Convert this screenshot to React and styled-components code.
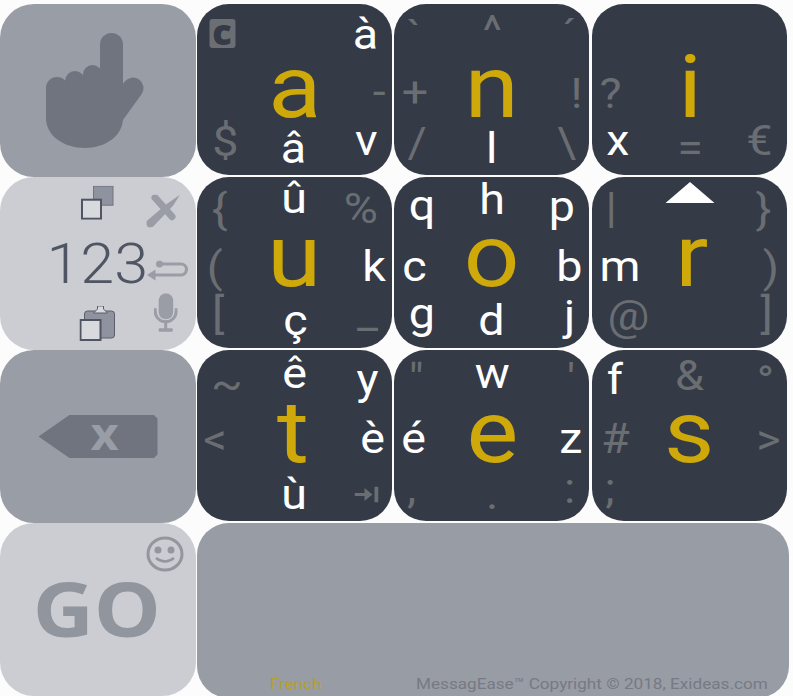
import React from "react";
import styled, { createGlobalStyle } from "styled-components";

const Global = createGlobalStyle`
    html, body {
        margin: 0;
        height: 696px;
        overflow: hidden;
        background-color: #FCFCFC;
        font-family: Roboto, "Liberation Sans", sans-serif;
    }
`;

const Board = styled.div`
    display: grid;
    grid-template-columns: 197px 197px 198px 198px;
    grid-template-rows: 173px 173px 173px 173px;
    padding-top: 4px;
    width: 793px;
    height: 692px;
    overflow: hidden;
`;

const SideKey = styled.div`
    position: relative;
    display: grid;
    grid-template-columns: repeat(3, minmax(0, 1fr));
    grid-template-rows: repeat(3, minmax(0, 1fr));
    width: 196px;
    height: 173px;
    border-radius: 34px;
    background-color: ${props => props.$light ? "#CBCDD3" : "#999DA5"};
`;

const CenterKey = styled(SideKey)`
    display: flex;
    align-items: center;
    justify-content: center;
`;

const Key = styled.div`
    display: grid;
    grid-template-columns: repeat(3, 65px);
    grid-template-rows: repeat(3, 57px);
    width: 195px;
    height: 171px;
    border-radius: 32px;
    background-color: #343A46;
`;

const WideKey = styled.div`
    grid-column: 2 / span 3;
    display: flex;
    align-items: flex-end;
    width: 592px;
    height: 175px;
    padding: 0 0 5px 73px;
    box-sizing: border-box;
    border-radius: 32px;
    background-color: #989CA4;
`;

const Slot = styled.div`
    grid-column: ${props => props.$col + 1};
    grid-row: ${props => props.$row + 1};
    justify-self: center;
    align-self: center;
    line-height: ${props => props.$size > 80 ? 0.6 : 1};
    font-size: ${props => props.$size || 42}px;
    font-weight: ${props => props.$weight || 400};
    color: ${props => props.$color || "#FFFFFF"};
    white-space: nowrap;
    transform: translate(${props => props.$dx || 0}px, ${props => props.$dy || 0}px) scaleX(${props => props.$text ? 1.11 : 1});
    svg { display: block; }
`;

const CBadge = styled.div`
    width: 26px;
    height: 29px;
    border-radius: 3px;
    background-color: #6B6E73;
    color: #343A46;
    font-family: "Open Sans", sans-serif;
    font-weight: 800;
    font-size: 36px;
    line-height: 25px;
    text-align: center;
`;

const HandWrap = styled.div`
    margin-right: 6px;
    svg { display: block; }
`;

const Backspace = styled.div`
    display: flex;
    align-items: center;
    justify-content: center;
    width: 119px;
    height: 43px;
    padding-left: 14px;
    box-sizing: border-box;
    background-color: #6F747F;
    clip-path: polygon(26% 0, 97% 0, 100% 8%, 100% 92%, 97% 100%, 26% 100%, 0 50%);
`;

const BackspaceX = styled.span`
    display: block;
    color: #999DA5;
    font-family: "Open Sans", sans-serif;
    font-weight: 700;
    font-size: 44px;
    line-height: 43px;
    transform: translateY(-3px) scaleX(1.11);
`;

const Go = styled.div`
    font-family: "Open Sans", sans-serif;
    font-weight: 700;
    font-size: 76px;
    line-height: 1;
    color: #91959E;
    margin: -3px 3px 0 0;
    transform: scaleX(1.11);
`;

const SmileBadge = styled.div`
    position: absolute;
    top: 13px;
    right: 12px;
    svg { display: block; }
`;

const French = styled.span`
    display: block;
    width: 146px;
    font-size: 15.5px;
    line-height: 18px;
    color: #B3A02E;
    transform: scaleX(1.1);
    transform-origin: left center;
`;

const Copyright = styled.span`
    display: block;
    font-size: 15.5px;
    line-height: 18px;
    color: #767A84;
    white-space: nowrap;
    transform: scaleX(1.106);
    transform-origin: left center;
`;

const GOLD = "#CFA90A";
const GREY = "#6A6D72";

const gold = (t, col, row, dx, dy) => ({ t, col, row, dx, dy, size: 88, color: GOLD, text: true });
const white = (t, col, row, dx, dy) => ({ t, col, row, dx, dy, text: true });
const grey = (t, col, row, dx, dy) => ({ t, col, row, dx, dy, color: GREY, text: true });

function Triangle() {
    return (
        <svg width="49" height="21" viewBox="0 0 49 21">
            <polygon points="24.5,0 49,21 0,21" fill="#FFFFFF" />
        </svg>
    );
}

function TabIcon() {
    return (
        <svg width="24" height="16" viewBox="0 0 24 16" fill={GREY}>
            <rect x="20" y="0" width="4" height="16" />
            <rect x="0" y="6.5" width="12" height="3" />
            <polygon points="10,1.5 18,8 10,14.5" />
        </svg>
    );
}

const keys = [
    [
        { t: <CBadge>c</CBadge>, col: 0, row: 0, dx: -7.5, dy: 1 },
        white("à", 2, 0, 6, 2),
        gold("a", 1, 1, 0, -2.5),
        grey("-", 2, 1, 19.5, 2),
        grey("$", 0, 2, -4.5, -5),
        white("â", 1, 2, -1, 1.5),
        white("v", 2, 2, 7, -6),
    ],
    [
        grey("`", 0, 0, -12.5, 4),
        grey("^", 1, 0, 0.5, -2),
        grey("´", 2, 0, 12.5, 3),
        grey("+", 0, 1, -12, 3),
        gold("n", 1, 1, 0.5, -2.5),
        grey("!", 2, 1, 20, 4),
        grey("/", 0, 2, -9.5, -4),
        white("l", 1, 2, 0.5, 2),
        grey("\\", 2, 2, 10, -4),
    ],
    [
        gold("i", 1, 1, 0.5, -2.5),
        grey("?", 0, 1, -14.5, 4),
        white("x", 0, 2, -6.5, -6),
        grey("=", 1, 2, 0.5, 1),
        grey("€", 2, 2, 4.5, -6),
    ],
    [
        grey("{", 0, 0, -9.5, 4),
        white("û", 1, 0, -0.5, -7),
        grey("%", 2, 0, 1.5, 3),
        grey("(", 0, 1, -14.5, 5),
        gold("u", 1, 1, 0, -6),
        white("k", 2, 1, 14.5, 4),
        grey("[", 0, 2, -11.5, -6),
        white("ç", 1, 2, 0.5, 1),
        grey("_", 2, 2, 8, -6),
    ],
    [
        white("q", 0, 0, -5, 0),
        white("h", 1, 0, 0.5, -6),
        white("p", 2, 0, 5, 1),
        white("c", 0, 1, -12.5, 4),
        gold("o", 1, 1, 0.5, -6),
        white("b", 2, 1, 12.5, 4),
        white("g", 0, 2, -5, -6),
        white("d", 1, 2, -0.5, 1),
        white("j", 2, 2, 13.5, -4),
    ],
    [
        grey("|", 0, 0, -13, 2),
        { t: <Triangle />, col: 1, row: 0, dx: 0.5, dy: -13 },
        grey("}", 2, 0, 9.5, 4),
        white("m", 0, 1, -4.5, 4),
        gold("r", 1, 1, 2, -6),
        grey(")", 2, 1, 16.5, 5),
        grey("@", 0, 2, 3.5, -4),
        grey("]", 2, 2, 12, -6),
    ],
    [
        grey("~", 0, 0, -2.5, 5),
        white("ê", 1, 0, 0.5, -5),
        white("y", 2, 0, 7.5, 1),
        grey("<", 0, 1, -14.5, 4),
        gold("t", 1, 1, -1.5, -3),
        white("è", 2, 1, 13.5, 3),
        white("ù", 1, 2, -0.5, 2),
        { t: <TabIcon />, col: 2, row: 2, dx: 6.5, dy: 1.5 },
    ],
    [
        grey('"', 0, 0, -10.5, 1),
        white("w", 1, 0, 0.5, -5),
        grey("'", 2, 0, 14.5, 1),
        white("é", 0, 1, -12.5, 3),
        gold("e", 1, 1, 1, -3),
        white("z", 2, 1, 14.5, 3),
        grey(",", 0, 2, -14.5, -4),
        grey(".", 1, 2, 0.5, 2),
        grey(":", 2, 2, 13.5, -4),
    ],
    [
        white("f", 0, 0, -9.5, 1),
        grey("&", 1, 0, 0.5, -3),
        grey("°", 2, 0, 10.5, 3),
        grey("#", 0, 1, -9.5, 3),
        gold("s", 1, 1, -0.5, -3),
        grey(">", 2, 1, 13.5, 4),
        grey(";", 0, 2, -14.5, -4),
    ],
];

function HandIcon() {
    return (
        <svg width="98" height="116" viewBox="46 33 98 116" fill="#6F747F">
            <rect x="100" y="33" width="23" height="70" rx="11.5" />
            <rect x="83" y="65" width="19" height="40" rx="9.5" />
            <rect x="65" y="71" width="20" height="40" rx="10" />
            <rect x="46" y="77" width="22" height="40" rx="11" />
            <line x1="133" y1="88" x2="115" y2="113" stroke="#6F747F" strokeWidth="21" strokeLinecap="round" />
            <path d="M46 90 H123 V118 C123 136 105 148 85 148 C64 148 46 136 46 118 Z" />
        </svg>
    );
}

function CopyIcon() {
    return (
        <svg width="33" height="34" viewBox="0 0 33 34">
            <rect x="12.5" y="0.5" width="19.5" height="19" fill="#8F93A0" stroke="#6F747F" />
            <rect x="1" y="14" width="19" height="19" fill="#D9DADE" stroke="#4F5562" strokeWidth="2" />
        </svg>
    );
}

function CancelIcon() {
    return (
        <svg width="35" height="33" viewBox="0 0 35 33" fill="#9A9DA5">
            <path d="M2 26 L22 9 L35 0 L28 11 L8 32 Q3 34 2 31 Q1 28 2 26 Z" />
            <path d="M10 3 L27 22" stroke="#9A9DA5" strokeWidth="7" strokeLinecap="round" />
        </svg>
    );
}

function ReturnIcon() {
    return (
        <svg width="41" height="21" viewBox="0 0 41 21">
            <circle cx="12.5" cy="3.5" r="3.5" fill="#9A9DA5" />
            <path d="M12 3.5 H34 a5.5 5.5 0 0 1 0 11 H8" fill="none" stroke="#9A9DA5" strokeWidth="3" />
            <polygon points="0,14.5 8.5,9 8.5,20" fill="#9A9DA5" />
        </svg>
    );
}

function ClipboardIcon() {
    return (
        <svg width="36" height="35" viewBox="0 0 36 35">
            <rect x="5" y="5" width="30" height="27" rx="3" fill="#8F93A0" stroke="#5A5F6A" />
            <polygon points="18,0 24,0 24,3 28,7 14,7 18,3" fill="#D9DADE" stroke="#5A5F6A" />
            <rect x="1" y="14" width="20" height="20" fill="#D9DADE" stroke="#4F5562" strokeWidth="2" />
        </svg>
    );
}

function MicIcon() {
    return (
        <svg width="24" height="39" viewBox="0 0 24 39" fill="#9A9DA5">
            <rect x="5" y="0" width="14.5" height="26" rx="7.25" />
            <path d="M1.5 15 V18 a10.5 10.5 0 0 0 21 0 V15" fill="none" stroke="#9A9DA5" strokeWidth="3" />
            <rect x="10.5" y="27" width="3" height="9" />
            <rect x="5" y="35" width="14" height="3.5" rx="1" />
        </svg>
    );
}

function SmileIcon() {
    return (
        <svg width="38" height="36" viewBox="0 0 38 36">
            <ellipse cx="19" cy="18" rx="17" ry="16" fill="none" stroke="#93969E" strokeWidth="3" />
            <circle cx="12" cy="14" r="3.5" fill="#93969E" />
            <circle cx="25" cy="14" r="3.5" fill="#93969E" />
            <path d="M10 22 Q19 29 28 22" fill="none" stroke="#93969E" strokeWidth="2.5" />
        </svg>
    );
}

function LetterKey({ labels }) {
    return (
        <Key>
            {labels.map((l, i) => (
                <Slot key={i} $col={l.col} $row={l.row} $dx={l.dx} $dy={l.dy} $size={l.size} $color={l.color} $text={l.text}>
                    {l.t}
                </Slot>
            ))}
        </Key>
    );
}

function App() {
    return (
        <>
            <Global />
            <Board>
                <CenterKey>
                    <HandWrap><HandIcon /></HandWrap>
                </CenterKey>
                {keys.slice(0, 3).map((labels, i) => <LetterKey key={i} labels={labels} />)}

                <SideKey $light>
                    <Slot $col={1} $row={0} $dy={-3.3}><CopyIcon /></Slot>
                    <Slot $col={2} $row={0} $dx={-1} $dy={5.7}><CancelIcon /></Slot>
                    <Slot $col={1} $row={1} $size={55} $weight={300} $color="#4F5562" $dy={1} $dx={-0.5} $text>123</Slot>
                    <Slot $col={2} $row={1} $dx={4} $dy={7.5}><ReturnIcon /></Slot>
                    <Slot $col={1} $row={2} $dx={-0.5} $dy={2}><ClipboardIcon /></Slot>
                    <Slot $col={2} $row={2} $dx={2.7} $dy={-8.7}><MicIcon /></Slot>
                </SideKey>
                {keys.slice(3, 6).map((labels, i) => <LetterKey key={i} labels={labels} />)}

                <CenterKey>
                    <Backspace><BackspaceX>x</BackspaceX></Backspace>
                </CenterKey>
                {keys.slice(6, 9).map((labels, i) => <LetterKey key={i} labels={labels} />)}

                <CenterKey $light>
                    <Go>GO</Go>
                    <SmileBadge><SmileIcon /></SmileBadge>
                </CenterKey>
                <WideKey>
                    <French>French</French>
                    <Copyright>MessagEase™ Copyright © 2018, Exideas.com</Copyright>
                </WideKey>
            </Board>
        </>
    );
}

export default App;
